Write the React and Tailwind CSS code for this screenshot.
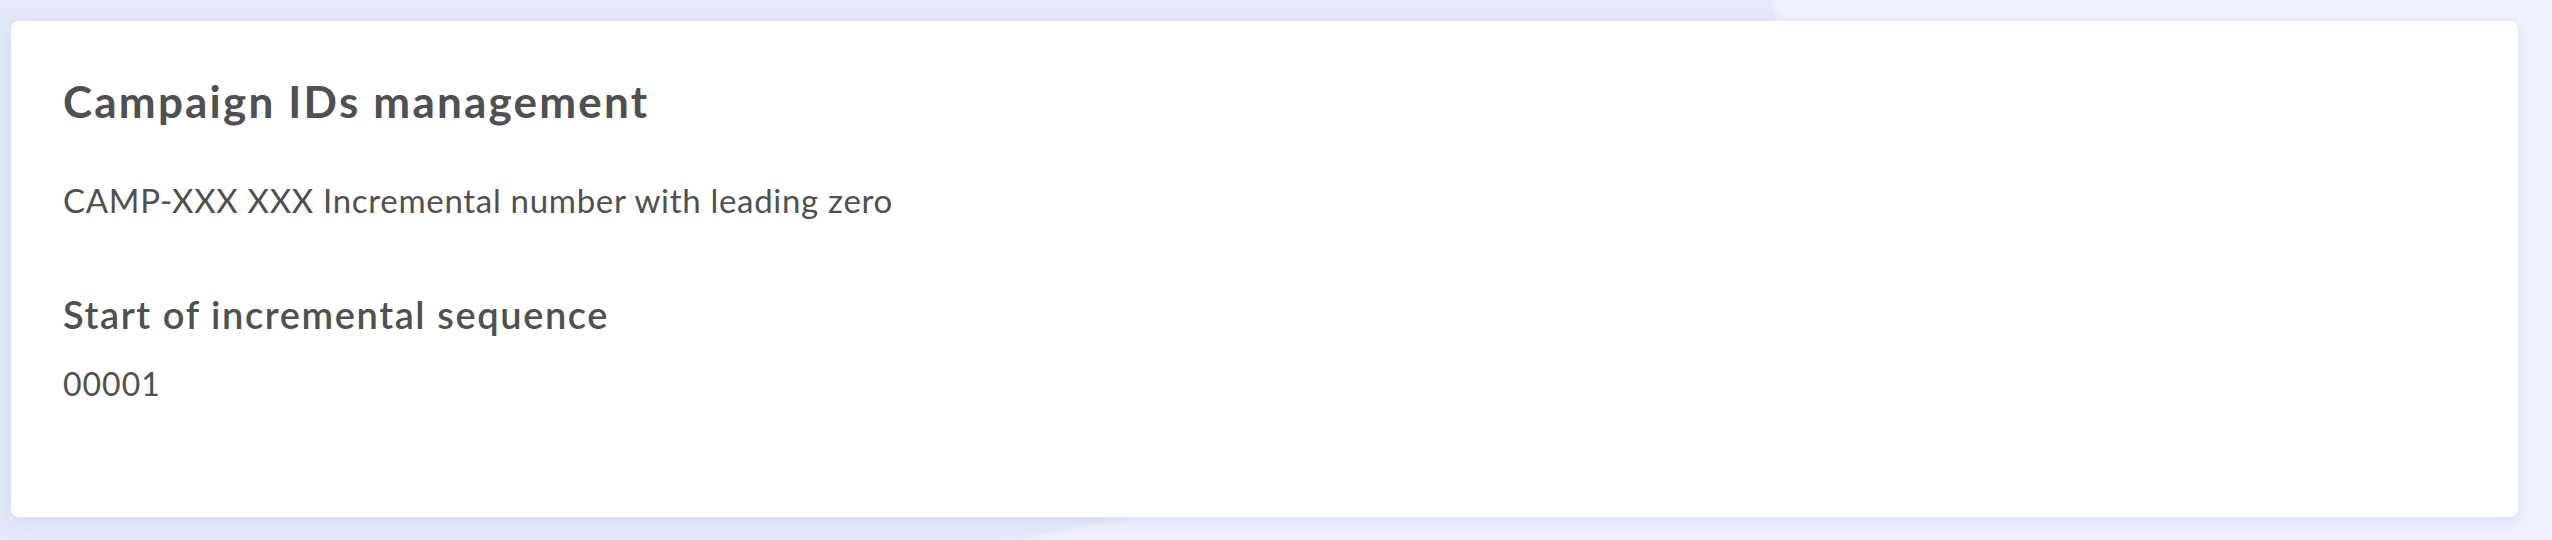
export default function App() {
  return (
    <div className="relative w-[2552px] h-[540px] overflow-hidden bg-[#eef2fc]">
      {/* soft tinted backdrop shape behind the card */}
      <div className="absolute left-[-400px] top-[-300px] w-[2180px] h-[900px] rotate-[-12deg] bg-[#e2e9f7] blur-[2px]" />
      <div className="relative pl-[11px] pr-[34px] pt-[21px] pb-[23px]">
        <div
          className="h-[496px] rounded-[8px] bg-white shadow-[0_4px_14px_rgba(196,210,240,0.55)] pl-[52px] pt-[58px] text-[#505050]"
          style={{ fontFamily: "Lato, 'Noto Sans', sans-serif" }}
        >
          <h1 className="text-[44px] leading-[44px] font-bold tracking-[2.2px]">
            Campaign IDs management
          </h1>
          <p className="mt-[61px] text-[33px] leading-[33px] tracking-[0.7px]">
            CAMP-XXX XXX Incremental number with leading zero
          </p>
          <h2 className="mt-[78px] text-[38px] leading-[38px] font-semibold tracking-[1.6px]">
            Start of incremental sequence
          </h2>
          <p className="mt-[35px] text-[32px] leading-[32px] tracking-[1px]">00001</p>
        </div>
      </div>
    </div>
  );
}
